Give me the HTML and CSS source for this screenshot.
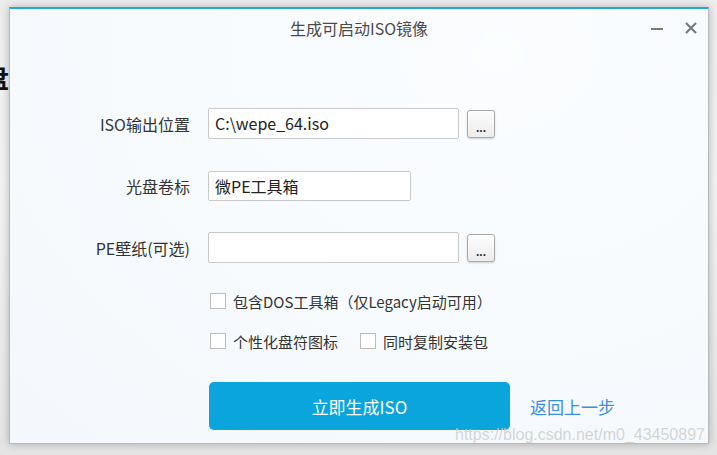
FILE: index.html
```html
<!DOCTYPE html>
<html lang="zh-CN">
<head>
<meta charset="utf-8">
<title>生成可启动ISO镜像</title>
<link rel="stylesheet" href="styles.css">
</head>
<body>
<div class="desktop">
  <span class="behind">盘</span>
  <div class="window">
    <div class="titlebar">
      <div class="title">生成可启动ISO镜像</div>
      <div class="controls">
        <svg class="ctl" width="14" height="14" viewBox="0 0 14 14"><path d="M1 8h12" stroke="#7a7a7a" stroke-width="2"/></svg>
        <svg class="ctl" width="14" height="14" viewBox="0 0 14 14"><path d="M2 2l10 10M12 2L2 12" stroke="#7a7a7a" stroke-width="2.2"/></svg>
      </div>
    </div>
    <div class="form">
      <div class="row">
        <label class="lbl">ISO输出位置</label>
        <div class="field">
          <div class="input wide">C:\wepe_64.iso</div>
          <button class="browse">...</button>
        </div>
      </div>
      <div class="row">
        <label class="lbl">光盘卷标</label>
        <div class="field">
          <div class="input short">微PE工具箱</div>
        </div>
      </div>
      <div class="row">
        <label class="lbl">PE壁纸(可选)</label>
        <div class="field">
          <div class="input wide"></div>
          <button class="browse">...</button>
        </div>
      </div>
      <div class="checks">
        <div class="check-row first">
          <span class="check"><span class="box"></span>包含DOS工具箱（仅Legacy启动可用）</span>
        </div>
        <div class="check-row">
          <span class="check"><span class="box"></span>个性化盘符图标</span>
          <span class="check second"><span class="box"></span>同时复制安装包</span>
        </div>
      </div>
      <div class="actions">
        <button class="primary">立即生成ISO</button>
        <a class="back">返回上一步</a>
      </div>
    </div>
  </div>
  <div class="watermark">https://blog.csdn.net/m0_43450897</div>
</div>
</body>
</html>
```
FILE: styles.css
```css
* { box-sizing: border-box; }
html, body { margin: 0; padding: 0; }
body {
  width: 717px;
  height: 455px;
  overflow: hidden;
  background: #e6e6e6;
  font-family: "Noto Sans CJK SC", "Microsoft YaHei", sans-serif;
}
.desktop {
  position: relative;
  width: 717px;
  height: 455px;
  background: linear-gradient(#ededed, #f3f3f3 40%, #e4e4e4);
}
.behind {
  position: absolute;
  left: -17px;
  top: 58px;
  font-size: 26px;
  font-weight: 700;
  color: #111;
}
.window {
  position: absolute;
  left: 9px;
  top: 7px;
  width: 700px;
  height: 437px;
  border: 1px solid #b9b9b9;
  border-top: 2px solid #26a6dd;
  background: radial-gradient(ellipse at 70% 10%, #fbfdff 0%, #f6fafd 60%, #f4f8fc 100%);
  box-shadow: 0 0 8px rgba(0,0,0,0.25);
}
.titlebar {
  position: relative;
  height: 40px;
  display: flex;
  align-items: center;
  justify-content: center;
}
.title {
  font-size: 16px;
  color: #4a4a4a;
  margin-top: -2px;
}
.controls {
  position: absolute;
  right: 10px;
  top: 12px;
  display: flex;
  gap: 20px;
}
.form {
  margin-top: 59px;
  display: flex;
  flex-direction: column;
}
.row {
  display: grid;
  grid-template-columns: 180px 1fr;
  column-gap: 18px;
  align-items: center;
  height: 31px;
  margin-bottom: 31px;
}
.row:nth-child(3) { margin-bottom: 0; }
.lbl {
  text-align: right;
  font-size: 16px;
  color: #333;
}
.field {
  display: flex;
  align-items: center;
}
.input {
  height: 31px;
  border: 1px solid #c9c9c9;
  border-radius: 2px;
  background: #fff;
  font-size: 16px;
  color: #222;
  padding: 0 6px;
  line-height: 29px;
}
.input.wide { width: 251px; }
.input.short { width: 203px; height: 30px; line-height: 28px; }
.browse {
  margin-left: 8px;
  width: 28px;
  height: 28px;
  padding: 9px 0 0;
  border: 1px solid #a9a9a9;
  border-radius: 3px;
  background: linear-gradient(#fdfdfd, #ececec);
  box-shadow: 0 1px 2px rgba(0,0,0,0.18);
  font-family: "Liberation Sans", sans-serif;
  font-size: 12px;
  font-weight: 700;
  color: #333;
  line-height: 12px;
}
.checks {
  margin-top: 30px;
  padding-left: 200px;
  display: flex;
  flex-direction: column;
  gap: 24px;
}
.check-row {
  display: flex;
  height: 16px;
  align-items: center;
}
.check {
  display: flex;
  align-items: center;
  font-size: 15px;
  color: #333;
  white-space: nowrap;
}
.box {
  width: 16px;
  height: 16px;
  border: 1px solid #bdbdbd;
  background: #fff;
  margin-right: 7px;
  flex: none;
}
.check.second { margin-left: 22px; }
.actions {
  margin-top: 33px;
  padding-left: 199px;
  display: flex;
  align-items: center;
}
.primary {
  width: 301px;
  height: 48px;
  border: none;
  border-radius: 5px;
  background: #0aa5dc;
  color: #fff;
  font-family: inherit;
  font-size: 17px;
}
.back {
  margin-left: 20px;
  font-size: 17px;
  color: #3a8fe0;
}
.watermark {
  position: absolute;
  left: 455px;
  top: 426px;
  font-family: "Liberation Sans", sans-serif;
  font-size: 16px;
  color: rgba(205,205,205,0.85);
  white-space: nowrap;
}
```
